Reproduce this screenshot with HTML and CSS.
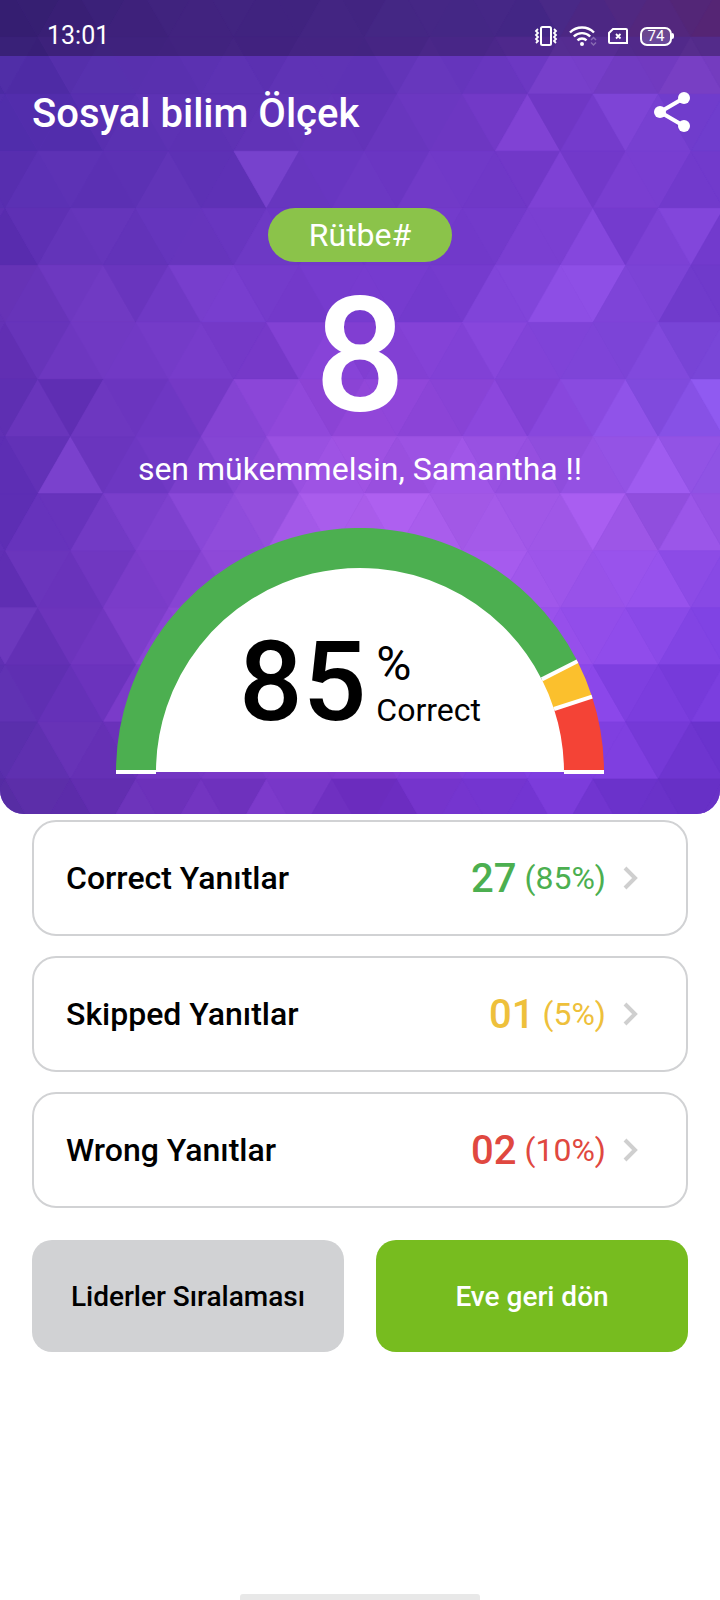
FILE: index.html
```html
<!DOCTYPE html>
<html lang="tr">
<head>
<meta charset="utf-8">
<meta name="viewport" content="width=device-width, initial-scale=1">
<title>Sosyal bilim Ölçek</title>
<link rel="stylesheet" href="styles.css">
</head>
<body>
<div class="screen">
  <header class="hero">
    <svg class="facets" id="facets" viewBox="0 0 720 813" preserveAspectRatio="none" aria-hidden="true"></svg>

    <div class="status">
      <span class="clock">13:01</span>
      <span class="status-icons">
        <svg width="24" height="24" viewBox="0 0 24 24" fill="none" stroke="currentColor" stroke-width="2" aria-hidden="true">
          <rect x="7" y="3" width="10" height="18" rx="1.5"/>
          <path d="M4 5 2 7l2 2-2 2 2 2-2 2 2 2-2 2M20 5l2 2-2 2 2 2-2 2 2 2-2 2 2 2" stroke-width="1.800"/>
        </svg>
        <svg width="28" height="24" viewBox="0 0 28 24" fill="none" stroke="currentColor" stroke-width="2.400" aria-hidden="true">
          <path d="M1 8.500a17 17 0 0 1 24 0M4.800 12.500a11.700 11.700 0 0 1 16.400 0M8.500 16.300a6.400 6.400 0 0 1 9 0"/>
          <circle cx="13" cy="20" r="2" fill="currentColor" stroke="none"/>
          <path d="m22 16 2.500-2.500L27 16M22 18.500l2.500 2.500 2.500-2.500" stroke-width="1.500" opacity=".3"/>
        </svg>
        <svg width="20" height="24" viewBox="0 0 20 24" fill="none" stroke="currentColor" stroke-width="2" aria-hidden="true">
          <path d="M5 5H18a1 1 0 0 1 1 1v13H2a1 1 0 0 1-1-1V9Z"/>
          <path d="m8 10 4.500 4.500m0-4.500L8 14.500" stroke-width="1.800"/>
        </svg>
        <span class="battery"><span>74</span></span>
      </span>
    </div>

    <div class="topbar">
      <h1 class="title">Sosyal bilim Ölçek</h1>
      <button class="share" type="button" aria-label="Paylaş">
        <svg width="40" height="44" viewBox="0 0 40 44" aria-hidden="true">
          <path d="M31 8 7 22l24 14" fill="none" stroke="currentColor" stroke-width="4"/>
          <g fill="currentColor"><circle cx="31" cy="8" r="6"/><circle cx="7" cy="22" r="6"/><circle cx="31" cy="36" r="6"/></g>
        </svg>
      </button>
    </div>

    <div class="rank">
      <span class="pill">Rütbe#</span>
      <strong class="rank-number">8</strong>
      <p class="praise">sen mükemmelsin, Samantha !!</p>
    </div>

    <div class="gauge">
      <svg class="gauge-arc" viewBox="0 0 488 246" aria-hidden="true">
        <path d="M20 244a224 224 0 0 1 448 0Z" fill="#fff"/>
        <g fill="none" stroke-width="40">
          <path d="M20 244A224 224 0 0 1 443.600 142.300" stroke="#4caf50"/>
          <path d="M443.600 142.300A224 224 0 0 1 457 174.800" stroke="#fbc02d"/>
          <path d="M457 174.800A224 224 0 0 1 468 244" stroke="#f44336"/>
        </g>
        <path d="M0 244h40M448 244h40M425.800 151.400 461.400 133.200M438 181 476.100 168.600" stroke="#fff" stroke-width="4"/>
      </svg>
      <div class="score">
        <strong class="score-number">85</strong>
        <span class="score-side">
          <span class="score-percent">%</span>
          <span class="score-label">Correct</span>
        </span>
      </div>
    </div>
  </header>

  <main class="content">
    <div class="results">
      <button class="card" type="button">
        <span class="card-label">Correct Yanıtlar</span>
        <span class="card-value green"><strong>27</strong><span>(85%)</span></span>
        <svg class="chevron" width="18" height="24" viewBox="0 0 18 24" aria-hidden="true"><path d="m3 2 10 10L3 22"/></svg>
      </button>
      <button class="card" type="button">
        <span class="card-label">Skipped Yanıtlar</span>
        <span class="card-value amber"><strong>01</strong><span>(5%)</span></span>
        <svg class="chevron" width="18" height="24" viewBox="0 0 18 24" aria-hidden="true"><path d="m3 2 10 10L3 22"/></svg>
      </button>
      <button class="card" type="button">
        <span class="card-label">Wrong Yanıtlar</span>
        <span class="card-value red"><strong>02</strong><span>(10%)</span></span>
        <svg class="chevron" width="18" height="24" viewBox="0 0 18 24" aria-hidden="true"><path d="m3 2 10 10L3 22"/></svg>
      </button>
    </div>
    <div class="actions">
      <button class="action secondary" type="button">Liderler Sıralaması</button>
      <button class="action primary" type="button">Eve geri dön</button>
    </div>
  </main>

  <div class="home-bar"></div>
</div>
<script src="facets.js"></script>
</body>
</html>
```
FILE: styles.css
```css
* {
  box-sizing: border-box;
}

body {
  margin: 0;
  background: #fff;
  color: #000;
  font-family: Roboto, "Liberation Sans", sans-serif;
}

button {
  border: 0;
  padding: 0;
  background: none;
  color: inherit;
  font: inherit;
  cursor: pointer;
}

h1,
p {
  margin: 0;
}

.screen {
  display: flex;
  flex-direction: column;
  min-height: 100vh;
}

.hero {
  position: relative;
  isolation: isolate;
  overflow: hidden;
  padding-bottom: 40px;
  border-radius: 0 0 24px 24px;
  background: #6f39c8;
  color: #fff;
}

.facets {
  position: absolute;
  inset: 0;
  z-index: -1;
  width: 100%;
  height: 100%;
}

.status {
  display: flex;
  align-items: center;
  justify-content: space-between;
  height: 56px;
  padding: 16px 46px 0 47px;
  background: rgba(0, 0, 0, 0.28);
}

.clock {
  font-size: 25px;
  line-height: 40px;
}

.status-icons {
  display: flex;
  align-items: center;
  gap: 11px;
}

.battery {
  display: flex;
  align-items: center;
  margin-left: 1px;
}

.battery span {
  width: 32px;
  border: 2px solid #fff;
  border-radius: 7px;
  background: rgba(255, 255, 255, 0.15);
  font-size: 15px;
  line-height: 15px;
  text-align: center;
}

.battery::after {
  content: "";
  width: 2px;
  height: 6px;
  border-radius: 0 2px 2px 0;
  background: #fff;
}

.topbar {
  display: flex;
  align-items: center;
  justify-content: space-between;
  height: 112px;
  padding: 0 27px 0 32px;
}

.title {
  padding-top: 4px;
  font-size: 40px;
  font-weight: 500;
  line-height: 48px;
}

.share {
  display: flex;
}

.rank {
  display: flex;
  flex-direction: column;
  align-items: center;
  padding-top: 40px;
}

.pill {
  padding: 0 41px;
  border-radius: 27px;
  background: #8bc34a;
  font-size: 32px;
  line-height: 54px;
}

.rank-number {
  margin-top: 14px;
  font-size: 160px;
  font-weight: 500;
  line-height: 160px;
}

.praise {
  margin-top: 13px;
  font-size: 32px;
  line-height: 40px;
}

.gauge {
  display: grid;
  justify-items: center;
  width: 488px;
  max-width: 100%;
  margin: 39px auto 0;
}

.gauge-arc,
.score {
  grid-area: 1 / 1;
}

.gauge-arc {
  width: 100%;
}

.score {
  display: flex;
  align-items: flex-end;
  align-self: end;
  gap: 10px;
  margin-bottom: 44px;
  color: #000;
}

.score-number {
  font-size: 112px;
  font-weight: 500;
  line-height: 96px;
}

.score-side {
  display: flex;
  flex-direction: column;
}

.score-percent {
  font-size: 48px;
  line-height: 52px;
}

.score-label {
  font-size: 32px;
  line-height: 40px;
}

.content {
  padding: 6px 32px 0;
}

.results {
  display: grid;
  gap: 20px;
}

.card {
  display: flex;
  align-items: center;
  height: 116px;
  padding: 0 46px 0 32px;
  border: 2px solid #d1d2d4;
  border-radius: 24px;
  font-size: 32px;
}

.card-label {
  flex: 1;
  font-weight: 500;
  text-align: left;
}

.card-value {
  display: flex;
  align-items: center;
  gap: 8px;
}

.card-value strong {
  font-size: 40px;
  font-weight: 500;
}

.green {
  color: #4caf50;
}

.amber {
  color: #eec03b;
}

.red {
  color: #e04840;
}

.chevron {
  margin-left: 16px;
  fill: none;
  stroke: #cfcfcf;
  stroke-width: 4;
}

.actions {
  display: grid;
  grid-template-columns: 1fr 1fr;
  gap: 32px;
  margin-top: 32px;
}

.action {
  height: 112px;
  border-radius: 20px;
  font-size: 28px;
  font-weight: 500;
}

.secondary {
  background: #d1d2d4;
}

.primary {
  background: #77bc1f;
  color: #fff;
}

.home-bar {
  width: 240px;
  height: 6px;
  margin: auto auto 0;
  border-radius: 3px 3px 0 0;
  background: #e8e8e8;
}
```
FILE: facets.js
```js
// Triangular facets over a coarse colour field.
const field = [
  ["4a2b9c", "5830ae", "5c34b4", "6138bd", "7a349f"],
  ["4f2daa", "5c31b2", "6334b8", "7439c8", "7140d0"],
  ["5a2fb2", "6033b8", "6c38c6", "7239ca", "7138cb"],
  ["6431b4", "743cca", "783bd0", "7c42d6", "7640d2"],
  ["6030b4", "7239c6", "9045d8", "8443d8", "8452e6"],
  ["5e2fb6", "7c40ce", "a75ae8", "a058e6", "9854e4"],
  ["6230b4", "8440d0", "b265f0", "a056ee", "8446e8"],
  ["5c30b0", "7636c6", "9040d8", "8a46ec", "783cdc"],
  ["552ca2", "6e32bc", "7030c2", "7436d4", "6630c4"]
].map(row => row.map(hex => [0, 2, 4].map(i => parseInt(hex.substr(i, 2), 16))));

// Lightness shift by "strip,column".
const accents = {
  "-1,15": -5, "0,2": 3, "0,7": -3, "0,16": 10, "0,17": 8, "0,20": 6,
  "1,1": -4, "1,15": 16, "1,18": 14, "1,19": 6, "1,20": -2, "1,16": -5,
  "2,7": 22, "2,16": 14, "2,12": 4, "2,6": -5, "2,5": -4, "2,18": 8, "2,19": 8,
  "3,17": 20, "3,16": 6, "3,15": 6, "3,20": 18, "3,19": 10, "3,18": 0, "3,-1": -6, "3,1": 3, "3,2": 3,
  "4,14": 7, "4,15": 7, "4,16": 22, "4,17": 24, "4,18": 7, "4,19": 5, "4,20": -7, "4,21": -8, "4,12": -6, "4,13": -5,
  "4,1": 5, "4,2": 5, "4,3": -6, "4,5": 5, "4,6": 6,
  "5,1": 5, "5,2": 5, "5,9": 8, "5,8": 5, "5,6": -5, "5,7": -6, "5,14": 8, "5,19": 4, "5,20": -6, "5,21": -4, "5,0": 2,
  "6,1": -10, "6,0": 6, "6,7": 12, "6,6": 10, "6,8": 12, "6,18": 14, "6,16": 4, "6,17": 5, "6,15": -4, "6,14": 6, "6,20": 3, "6,19": -5, "6,21": 14, "6,3": -3, "6,4": -3,
  "7,1": 20, "7,2": -4, "7,3": -5, "7,4": -6, "7,19": 17, "7,13": 10, "7,8": 10, "7,9": 8, "7,18": 3, "7,0": -3, "7,6": 3, "7,16": -5,
  "8,18": 2, "8,17": 14, "8,19": -10, "8,8": 11, "8,9": 9, "8,6": 6, "8,5": 8, "8,3": 4, "8,1": -4, "8,20": 5, "8,11": 9, "8,12": 5,
  "9,-1": -3, "9,1": -6, "9,2": -4, "9,4": -3, "9,19": 6, "9,18": 4,
  "10,-1": 12, "10,0": -5, "10,4": 12, "10,5": 10, "10,3": 4, "10,20": -3,
  "11,0": -5, "11,3": 9, "11,4": 9, "11,5": 8, "11,18": -8, "11,19": -7, "11,20": -9, "11,17": 3,
  "12,1": 4, "12,2": -4, "12,3": -3, "12,18": 6, "12,20": -7, "12,21": -8,
  "13,1": -4, "13,3": 6, "13,5": 5, "13,7": 14, "13,8": 9, "13,10": -8, "13,11": -8, "13,16": 10, "13,18": -4
};

const half = 32.65, rise = 57, left = 38, top0 = 37;
const ns = "http://www.w3.org/2000/svg";
const svg = document.getElementById("facets");

function sample(x, y) {
  const u = Math.min(3.999, Math.max(0, x / 180));
  const v = Math.min(7.999, Math.max(0, y / 101.600));
  const c = Math.floor(u), r = Math.floor(v), a = u - c, b = v - r;
  return [0, 1, 2].map(i =>
    (field[r][c][i] * (1 - a) + field[r][c + 1][i] * a) * (1 - b) +
    (field[r + 1][c][i] * (1 - a) + field[r + 1][c + 1][i] * a) * b);
}

for (let k = -1; k < 14; k++) {
  for (let n = -3; n < 23; n++) {
    const x = left + n * half, y = top0 + k * rise;
    const up = (n + k) % 2 === 0;
    const points = up
      ? [[x, y], [x + half, y + rise], [x - half, y + rise]]
      : [[x - half, y], [x + half, y], [x, y + rise]];
    const key = k + "," + n;
    const noise = Math.abs(Math.sin(n * 12.9898 + k * 78.233) * 43758.5453) % 1;
    const shift = key in accents ? accents[key] * 0.850 : noise * 5 - 2.500;
    const color = sample(x, y + rise / 2).map((v, i) => Math.round(v + shift * [1, 0.700, 0.900][i]));
    const fill = "rgb(" + color.join(",") + ")";
    const facet = document.createElementNS(ns, "polygon");
    facet.setAttribute("points", points.map(p => p.join(",")).join(" "));
    facet.setAttribute("fill", fill);
    facet.setAttribute("stroke", fill);
    facet.setAttribute("stroke-width", "0.600");
    svg.appendChild(facet);
  }
}
```
